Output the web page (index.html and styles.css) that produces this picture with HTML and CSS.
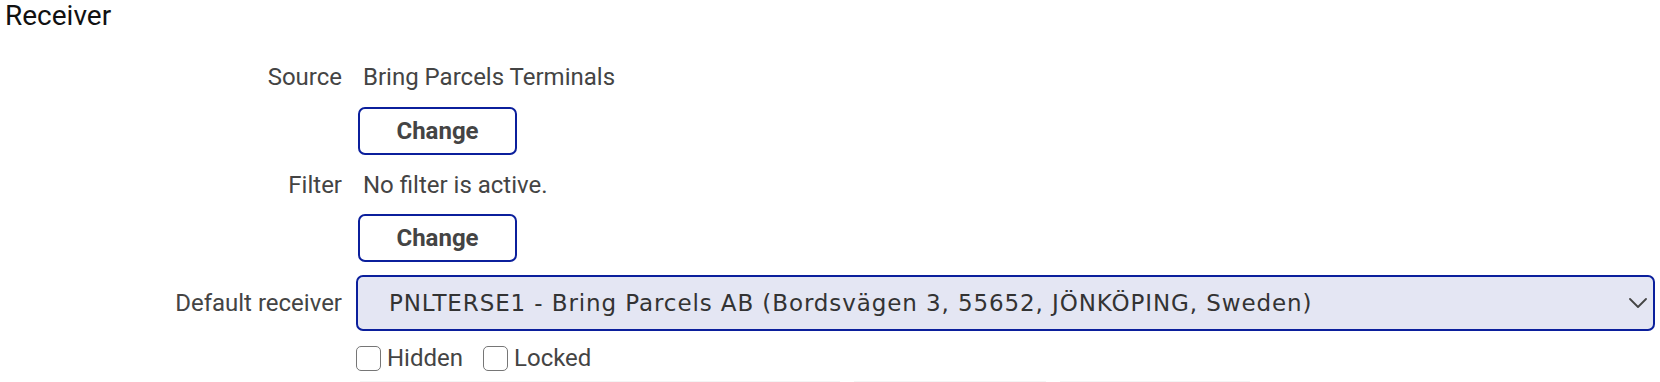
FILE: index.html
```html
<!DOCTYPE html>
<html lang="en">
<head>
<meta charset="utf-8">
<title>Receiver</title>
<link rel="stylesheet" href="styles.css">
</head>
<body>
<section class="panel">
  <h2 class="panel-title">Receiver</h2>
  <div class="field field-text">
    <div class="field-label">Source</div>
    <div class="field-value">Bring Parcels Terminals</div>
  </div>
  <div class="field field-button">
    <div class="field-label"></div>
    <div class="field-value"><button class="btn" type="button">Change</button></div>
  </div>
  <div class="field field-text">
    <div class="field-label">Filter</div>
    <div class="field-value">No filter is active.</div>
  </div>
  <div class="field field-button field-button-last">
    <div class="field-label"></div>
    <div class="field-value"><button class="btn" type="button">Change</button></div>
  </div>
  <div class="field field-select">
    <label class="field-label" for="receiver">Default receiver</label>
    <div class="field-value">
      <div class="select-wrap">
        <select id="receiver" class="select">
          <option>PNLTERSE1 - Bring Parcels AB (Bordsvägen 3, 55652, JÖNKÖPING, Sweden)</option>
        </select>
        <svg class="select-chevron" width="18" height="10" viewBox="0 0 18 10" aria-hidden="true">
          <polyline points="1,1 9,9 17,1" fill="none" stroke="#444" stroke-width="1.8" stroke-linecap="round" stroke-linejoin="round"/>
        </svg>
      </div>
    </div>
  </div>
  <div class="field field-checks">
    <div class="field-label"></div>
    <div class="field-value checks">
      <label class="check"><input type="checkbox"><span>Hidden</span></label>
      <label class="check"><input type="checkbox"><span>Locked</span></label>
    </div>
  </div>
  <div class="field field-next">
    <div class="field-label"></div>
    <div class="field-value next-row">
      <div class="next-item next-a"></div>
      <div class="next-item next-b"></div>
      <div class="next-item next-c"></div>
    </div>
  </div>
</section>
</body>
</html>
```

FILE: styles.css
```css
* { box-sizing: border-box; }

html, body {
  margin: 0;
  padding: 0;
  background: #ffffff;
}

body {
  font-family: Roboto, "Liberation Sans", Arial, sans-serif;
  color: #444444;
  font-size: 24px;
  overflow: hidden;
}

.panel {
  padding: 0 5px 0 5px;
}

.panel-title {
  margin: 0;
  font-size: 28px;
  font-weight: 400;
  line-height: 32px;
  color: #111111;
}

.field {
  display: flex;
  gap: 14px;
  align-items: center;
}

.field-label {
  flex: 0 0 337px;
  text-align: right;
  line-height: 28px;
  color: #444444;
}

.field-value {
  flex: 1 1 auto;
  min-width: 0;
}

.field-text {
  margin-top: 16px;
}

.panel-title + .field {
  margin-top: 31px;
}

.field-text .field-value {
  line-height: 28px;
  padding-left: 7px;
}

.field-button {
  margin-top: 16px;
}

.field-button-last {
  margin-top: 15px;
}

.btn {
  width: 159px;
  height: 48px;
  margin-left: 2px;
  border: 2px solid #0b1f9c;
  border-radius: 7px;
  background: #ffffff;
  color: #444444;
  font-family: Roboto, "Liberation Sans", Arial, sans-serif;
  font-size: 24px;
  font-weight: 700;
  padding: 0;
  cursor: pointer;
}

.field-select {
  margin-top: 13px;
}

.select-wrap {
  position: relative;
}

.select {
  appearance: none;
  -webkit-appearance: none;
  display: block;
  width: 100%;
  height: 56px;
  margin: 0;
  border: 2px solid #0b1f9c;
  border-radius: 7px;
  background: #e4e6f3;
  color: #333333;
  font-family: "DejaVu Sans", Verdana, sans-serif;
  font-size: 23px;
  letter-spacing: 0.9px;
  padding: 0 50px 0 31px;
}

.select-chevron {
  position: absolute;
  right: 8px;
  top: 23px;
  pointer-events: none;
}

.field-checks {
  margin-top: 13px;
}

.checks {
  display: flex;
  align-items: center;
  gap: 20px;
  line-height: 28px;
}

.check {
  display: inline-flex;
  align-items: center;
  gap: 6px;
  color: #444444;
}

.check input {
  appearance: none;
  -webkit-appearance: none;
  width: 25px;
  height: 25px;
  margin: 0;
  border: 1.5px solid #767676;
  border-radius: 5px;
  background: #ffffff;
}

.field-next {
  margin-top: 9px;
}

.next-row {
  display: flex;
  gap: 14px;
  padding-left: 4px;
}

.next-item {
  height: 6px;
  border-top: 1px solid #f4f4f4;
}

.next-a { width: 480px; }
.next-b { width: 192px; }
.next-c { width: 190px; }
```
